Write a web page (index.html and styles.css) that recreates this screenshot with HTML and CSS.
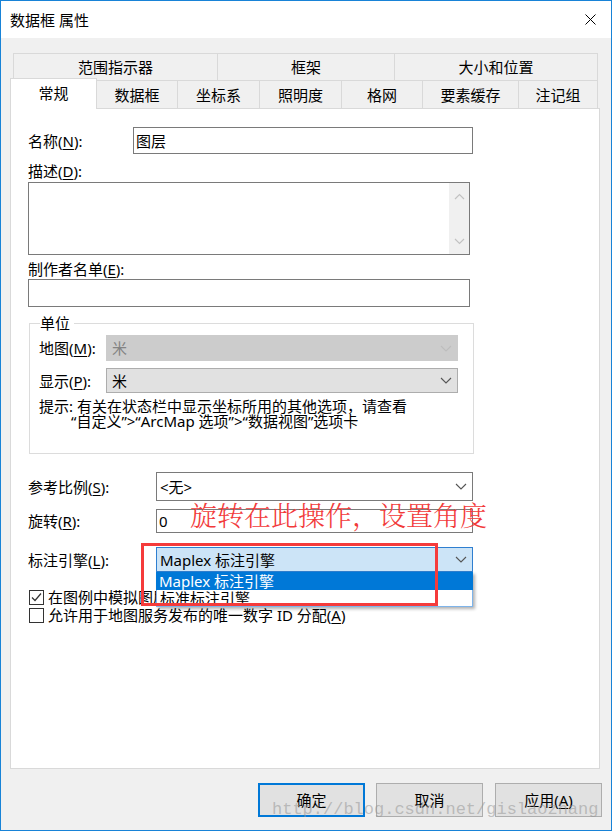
FILE: index.html
```html
<!DOCTYPE html>
<html lang="zh-CN">
<head>
<meta charset="utf-8">
<title>数据框 属性</title>
<link rel="stylesheet" href="styles.css">
</head>
<body>
<div class="window">
  <div class="titlebar">
    <span class="title">数据框 属性</span>
    <svg class="close" width="11" height="11" viewBox="0 0 11 11"><path d="M0.5 0.5 L10.5 10.5 M10.5 0.5 L0.5 10.5" stroke="#000" stroke-width="1" fill="none"/></svg>
  </div>
  <div class="body">
    <div class="tabs-upper">
      <div class="tab t-range">范围指示器</div>
      <div class="tab t-frame">框架</div>
      <div class="tab t-size">大小和位置</div>
    </div>
    <div class="tabs-lower">
      <div class="tab sel t-general">常规</div>
      <div class="tab t-df">数据框</div>
      <div class="tab t-cs">坐标系</div>
      <div class="tab t-light">照明度</div>
      <div class="tab t-grid">格网</div>
      <div class="tab t-cache">要素缓存</div>
      <div class="tab t-anno">注记组</div>
    </div>
    <div class="panel">
      <div class="row row-name">
        <span class="lbl lbl-name">名称(<u>N</u>):</span>
        <div class="textbox tb-name">图层</div>
      </div>
      <div class="lbl-line l-desc">描述(<u>D</u>):</div>
      <div class="textarea">
        <div class="vscroll">
          <svg width="11" height="7" viewBox="0 0 11 7"><path d="M1 6 L5.5 1.5 L10 6" stroke="#c2c2c2" stroke-width="1.2" fill="none"/></svg>
          <svg width="11" height="7" viewBox="0 0 11 7"><path d="M1 1 L5.5 5.5 L10 1" stroke="#c2c2c2" stroke-width="1.2" fill="none"/></svg>
        </div>
      </div>
      <div class="lbl-line l-author">制作者名单(<u>E</u>):</div>
      <div class="textbox tb-author"></div>

      <div class="group">
        <div class="legend">单位</div>
        <div class="grow g-map">
          <span class="glbl">地图(<u>M</u>):</span>
          <div class="select disabled"><span class="val">米</span>
            <svg width="12" height="7" viewBox="0 0 12 7"><path d="M1 1 L6 6 L11 1" stroke="#bdbdbd" stroke-width="1.1" fill="none"/></svg>
          </div>
        </div>
        <div class="grow g-disp">
          <span class="glbl">显示(<u>P</u>):</span>
          <div class="select normal"><span class="val">米</span>
            <svg width="12" height="7" viewBox="0 0 12 7"><path d="M1 1 L6 6 L11 1" stroke="#555" stroke-width="1.1" fill="none"/></svg>
          </div>
        </div>
        <div class="hint">
          <div>提示: 有关在状态栏中显示坐标所用的其他选项，请查看</div>
          <div class="hint2">“自定义”&gt;“ArcMap 选项”&gt;“数据视图”选项卡</div>
        </div>
      </div>

      <div class="row row-scale">
        <span class="lbl lbl-wide">参考比例(<u>S</u>):</span>
        <div class="combo white">
          <span class="val">&lt;无&gt;</span>
          <svg width="12" height="7" viewBox="0 0 12 7"><path d="M1 1 L6 6 L11 1" stroke="#555" stroke-width="1.1" fill="none"/></svg>
        </div>
      </div>
      <div class="row row-rot">
        <span class="lbl lbl-wide">旋转(<u>R</u>):</span>
        <div class="textbox tb-rot">0</div>
        <span class="annot">旋转在此操作，设置角度</span>
      </div>
      <div class="row row-engine">
        <span class="lbl lbl-wide">标注引擎(<u>L</u>):</span>
        <div class="combo focus">
          <span class="val">Maplex 标注引擎</span>
          <svg width="12" height="7" viewBox="0 0 12 7"><path d="M1 1 L6 6 L11 1" stroke="#555" stroke-width="1.1" fill="none"/></svg>
          <div class="droplist">
            <div class="item hot">Maplex 标注引擎</div>
            <div class="item">标准标注引擎</div>
          </div>
          <div class="redbox"></div>
        </div>
      </div>
      <div class="check c1">
        <span class="box"><svg width="13" height="13" viewBox="0 0 13 13"><path d="M2 6.5 L5 9.5 L11 2.5" stroke="#333" stroke-width="1.2" fill="none"/></svg></span>
        <span>在图例中模拟图层透明度</span>
      </div>
      <div class="check c2">
        <span class="box"></span>
        <span>允许用于地图服务发布的唯一数字 ID 分配(<u>A</u>)</span>
      </div>
    </div>

    <div class="buttons">
      <div class="btn default">确定</div>
      <div class="btn">取消</div>
      <div class="btn">应用(<u>A</u>)</div>
      <span class="watermark">http://blog.csdn.net/gislaozhang</span>
    </div>
  </div>
</div>
</body>
</html>
```
FILE: styles.css
```css
* { box-sizing: border-box; }
html, body { margin: 0; padding: 0; }
body {
  width: 612px;
  height: 831px;
  overflow: hidden;
  background: #f0f0f0;
  font-family: "Noto Sans", "Noto Sans CJK SC", sans-serif;
  font-size: 15px;
  color: #000;
}
u { text-decoration: underline; text-underline-offset: 2px; text-decoration-thickness: 1px; }

.window {
  width: 612px;
  height: 831px;
  border: 1px solid #1883d7;
  background: #f0f0f0;
  display: flex;
  flex-direction: column;
}
.titlebar {
  flex: none;
  height: 37px;
  background: #fff;
  display: flex;
  align-items: center;
  justify-content: space-between;
  padding: 0 15px 0 9px;
}
.title { line-height: 20px; }
.close { display: block; }

.body {
  flex: 1;
  padding: 15px 0 0 9px;
}

/* tabs */
.tab {
  border: 1px solid #d9d9d9;
  background: #f0f0f0;
  display: flex;
  align-items: center;
  justify-content: center;
  line-height: 18px;
  white-space: nowrap;
}
.tabs-upper {
  display: flex;
  margin-left: 3px;
  height: 27px;
}
.tabs-upper .tab { height: 27px; border-bottom: none; }
.tabs-upper .tab + .tab { margin-left: -1px; }
.t-range { width: 205px; }
.t-frame { width: 178px; }
.t-size { width: 204px; }

.tabs-lower {
  display: flex;
  align-items: flex-end;
  margin-top: -2px;
  height: 30px;
}
.tabs-lower .tab { height: 28px; border-bottom: none; padding-top: 1px; }
.tabs-lower .tab + .tab { margin-left: -1px; }
.tabs-lower .tab.sel {
  height: 31px;
  margin-bottom: -1px;
  background: #fff;
  position: relative;
  z-index: 2;
  padding-top: 0;
  padding-bottom: 2px;
}
.t-general { width: 87px; }
.t-df { width: 82px; }
.t-cs { width: 83px; }
.t-light { width: 83px; }
.t-grid { width: 82px; }
.t-cache { width: 97px; }
.t-anno { width: 80px; }

/* panel */
.panel {
  width: 590px;
  height: 661px;
  background: #fff;
  border: 1px solid #d9d9d9;
  padding: 18px 0 0 17px;
}
.row {
  display: flex;
  align-items: center;
  position: relative;
}
.lbl { line-height: 18px; white-space: nowrap; }
.lbl-name { width: 105px; }
.lbl-wide { width: 128px; }
.lbl-line { line-height: 18px; }

.textbox {
  border: 1px solid #7a7a7a;
  background: #fff;
  display: flex;
  align-items: center;
  padding-left: 2px;
  line-height: 18px;
}
.row-name { height: 27px; }
.tb-name { width: 340px; height: 27px; }
.l-desc { margin-top: 8px; }
.textarea {
  margin-top: 2px;
  width: 442px;
  height: 73px;
  border: 1px solid #7a7a7a;
  display: flex;
  justify-content: flex-end;
}
.vscroll {
  width: 20px;
  height: 100%;
  background: #f0f0f0;
  display: flex;
  flex-direction: column;
  align-items: center;
  justify-content: space-between;
  padding: 10px 0 9px;
}
.vscroll svg { display: block; }
.l-author { margin-top: 5px; }
.tb-author { margin-top: 1px; width: 442px; height: 28px; }

/* group */
.group {
  margin: 16px 0 0 1px;
  width: 445px;
  border: 1px solid #dcdcdc;
  padding: 0 0 24px 9px;
}
.legend {
  width: fit-content;
  margin: -10px 0 0 1px;
  padding: 0 4px 0 0;
  background: #fff;
  line-height: 18px;
}
.grow { display: flex; align-items: center; }
.glbl { width: 67px; line-height: 18px; white-space: nowrap; }
.select {
  width: 352px;
  display: flex;
  align-items: center;
  justify-content: space-between;
  padding: 0 5px 0 5px;
}
.select svg { display: block; }
.g-map { margin-top: 3px; }
.g-map .select { height: 26px; }
.g-disp { margin-top: 7px; }
.g-disp .select { height: 25px; }
.select.disabled { background: #cccccc; border: 1px solid #cccccc; color: #838383; }
.select.normal { background: #e1e1e1; border: 1px solid #adadad; }
.val { line-height: 18px; white-space: nowrap; }
.hint {
  margin-top: 6px;
  line-height: 15px;
  white-space: nowrap;
}
.hint2 { padding-left: 32px; }

/* lower form */
.combo {
  width: 317px;
  display: flex;
  align-items: center;
  justify-content: space-between;
  padding: 0 5px 0 3px;
  position: relative;
}
.combo > svg { display: block; }
.combo.white { background: #fff; border: 1px solid #7a7a7a; }
.combo.focus { background: #cce4f7; border: 1px solid #2f7fd0; height: 25px; }
.row-scale { margin-top: 18px; }
.row-scale .combo { height: 29px; }
.row-rot { margin-top: 8px; }
.tb-rot { width: 317px; height: 24px; }
.row-engine { margin-top: 14px; }

.annot {
  position: absolute;
  left: 162px;
  top: -9px;
  font-family: "Noto Serif CJK SC", "Noto Sans CJK SC", serif;
  font-weight: 300;
  font-size: 27px;
  line-height: 30px;
  color: #f23a3a;
  white-space: nowrap;
  z-index: 3;
}

.droplist {
  position: absolute;
  left: -1px;
  top: 24px;
  width: 317px;
  box-shadow: 2px 2px 3px rgba(0, 0, 0, 0.3);
  z-index: 4;
}
.droplist .item {
  height: 17px;
  line-height: 17px;
  padding-left: 3px;
  background: #fff;
  border: 1px solid #7eb4ea;
  border-top: none;
  white-space: nowrap;
}
.droplist .item.hot {
  height: 18px;
  line-height: 18px;
  background: #0078d7;
  color: #fff;
  border: none;
}
.redbox {
  position: absolute;
  left: -16px;
  top: -5px;
  width: 297px;
  height: 63px;
  border: 3px solid #f53b3b;
  z-index: 5;
}

.check {
  display: flex;
  align-items: center;
  gap: 4px;
  height: 18px;
  margin-left: 1px;
  line-height: 18px;
  white-space: nowrap;
}
.c1 { margin-top: 16px; }
.box {
  width: 15px;
  height: 15px;
  border: 1px solid #333;
  background: #fff;
  display: flex;
  align-items: center;
  justify-content: center;
}
.box svg { display: block; }

/* buttons */
.buttons {
  position: relative;
  margin-top: 14px;
  padding-right: 9px;
  display: flex;
  justify-content: flex-end;
  gap: 11px;
}
.btn {
  width: 107px;
  height: 34px;
  background: #e1e1e1;
  border: 1px solid #adadad;
  display: flex;
  align-items: center;
  justify-content: center;
  line-height: 18px;
}
.btn + .btn + .btn { margin-left: 1px; }
.btn.default { border: 2px solid #0078d7; }
.watermark {
  position: absolute;
  left: 262px;
  top: 17px;
  font-family: "Liberation Mono", monospace;
  font-size: 17px;
  line-height: 20px;
  color: rgba(150, 150, 150, 0.55);
  white-space: nowrap;
}
```
